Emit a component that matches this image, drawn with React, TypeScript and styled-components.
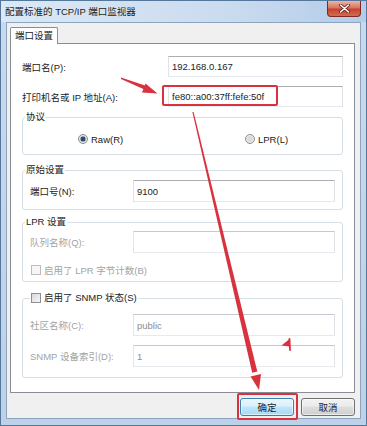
import React from 'react';
import styled, { createGlobalStyle } from 'styled-components';

const GlobalStyle = createGlobalStyle`
  html, body { margin: 0; padding: 0; background: #fff; }
  body {
    font-family: "Liberation Sans", "Noto Sans CJK SC", sans-serif;
    font-size: 9.5px;
    color: #222;
  }
  * { box-sizing: border-box; }
`;

const MARK = '#d8323e';

const Window = styled.div`
  position: relative;
  width: 367px;
  height: 426px;
  display: flex;
  flex-direction: column;
  border: 1px solid #56779c;
  background: linear-gradient(180deg, #c9daee 0%, #bdd1e8 100%);
  overflow: hidden;
`;

const TitleBar = styled.div`
  height: 21px;
  flex: none;
  display: flex;
  justify-content: space-between;
  align-items: flex-start;
  padding-left: 4px;
  background: linear-gradient(90deg, #dbe8f5 0%, #cbdcef 60%, #b3cce9 100%);
`;

const Title = styled.span`
  line-height: 21px;
  color: #1c1c1c;
`;

const CloseButton = styled.div`
  width: 34px;
  height: 16px;
  margin-right: 5px;
  display: flex;
  align-items: center;
  justify-content: center;
  border: 1px solid #7e2a22;
  border-top: none;
  border-radius: 0 0 4px 4px;
  background: linear-gradient(180deg, #ebb5a9 0%, #d9745f 45%, #c6432f 55%, #d56b50 100%);
`;

const Client = styled.div`
  flex: 1;
  margin: 0 5px 6px;
  background: #f0f0f0;
  border: 1px solid #8da4be;
  padding: 4px 5px 0 3px;
  display: flex;
  flex-direction: column;
`;

const TabStrip = styled.div`
  display: flex;
  align-items: flex-end;
  height: 16px;
`;

const Tab = styled.div`
  position: relative;
  z-index: 1;
  width: 48px;
  height: 17px;
  margin-bottom: -1px;
  background: #fff;
  border: 1px solid #898c95;
  border-bottom: none;
  border-radius: 2px 2px 0 0;
  text-align: center;
  line-height: 16px;
`;

const Panel = styled.div`
  height: 350px;
  background: #fff;
  border: 1px solid #898c95;
  padding: 12px 11px 0;
  display: flex;
  flex-direction: column;
`;

const FieldRow = styled.div<{ $label: number; $top?: number }>`
  display: grid;
  grid-template-columns: ${p => p.$label}px 1fr;
  align-items: center;
  margin-top: ${p => p.$top ?? 0}px;
`;

const Label = styled.span<{ $disabled?: boolean }>`
  color: ${p => (p.$disabled ? '#a3a3a3' : '#222')};
  white-space: nowrap;
`;

const BoxWrap = styled.div`
  position: relative;
`;

const TextBox = styled.input<{ $h?: number }>`
  display: block;
  width: 100%;
  height: ${p => p.$h ?? 21}px;
  padding: 0 3px;
  margin: 0;
  font: inherit;
  color: #222;
  background: #fff;
  border: 1px solid;
  border-color: #abadb3 #dbdfe6 #e3e9ef #e2e3ea;
  border-radius: 0;
  outline: none;
  &:disabled {
    color: #8c8c8c;
    background: #fff;
    border-color: #c6c9cf #dfe2e7 #e6e9ee #e2e4e9;
  }
`;

const MarkFrame = styled.div<{ $l: number; $t: number; $w: number; $h: number }>`
  position: absolute;
  left: ${p => p.$l}px;
  top: ${p => p.$t}px;
  width: ${p => p.$w}px;
  height: ${p => p.$h}px;
  border: 2px solid ${MARK};
  border-radius: 2px;
  pointer-events: none;
`;

const Group = styled.fieldset<{ $top: number; $pb: number }>`
  margin: ${p => p.$top}px 0 0;
  padding: 0 7px ${p => p.$pb}px;
  border: 1px solid #d5dfe5;
  border-radius: 3px;
  min-width: 0;
`;

const Legend = styled.legend<{ $indent?: number }>`
  padding: 0 1px;
  margin-left: ${p => p.$indent ?? -5}px;
  line-height: 16px;
  display: flex;
  align-items: center;
  gap: 3px;
`;

const RadioRow = styled.div`
  display: grid;
  grid-template-columns: 167px auto;
  padding-left: 48px;
  margin-top: 6px;
  height: 16px;
  align-items: center;
`;

const Choice = styled.label<{ $disabled?: boolean }>`
  display: flex;
  align-items: center;
  gap: 3px;
  color: ${p => (p.$disabled ? '#a3a3a3' : '#222')};
  white-space: nowrap;
`;

const Radio = styled.span<{ $checked?: boolean }>`
  width: 10px;
  height: 10px;
  border-radius: 50%;
  border: 1px solid #8e8f8f;
  background: ${p =>
    p.$checked
      ? 'radial-gradient(circle, #2d4d6b 0 2.2px, #9fb4c6 2.6px, #e6e6e6 3.6px)'
      : 'radial-gradient(circle, #dcdcdc 0 2.5px, #eeeeee 4px)'};
`;

const Check = styled.span<{ $disabled?: boolean }>`
  width: 10px;
  height: 10px;
  border: 1px solid ${p => (p.$disabled ? '#bcbcbc' : '#8e8f8f')};
  background: ${p => (p.$disabled ? '#f6f6f6' : 'linear-gradient(135deg, #d8d8d8, #f7f7f7)')};
`;

const CheckRow = styled.div`
  margin: 9px 0 0 1px;
  height: 16px;
  display: flex;
  align-items: center;
`;

const ButtonRow = styled.div`
  display: flex;
  justify-content: flex-end;
  gap: 7px;
  margin-top: 5px;
`;

const Button = styled.button<{ $default?: boolean }>`
  width: 54px;
  height: 18px;
  padding: 0;
  font: inherit;
  color: #1e1e1e;
  border-radius: 3px;
  border: 1px solid ${p => (p.$default ? '#3c7fb1' : '#707070')};
  background: ${p =>
    p.$default
      ? 'linear-gradient(180deg, #eaf6fd 0%, #d9f0fc 45%, #bee6fd 50%, #a7d9f5 100%)'
      : 'linear-gradient(180deg, #f2f2f2 0%, #ebebeb 45%, #dddddd 50%, #cfcfcf 100%)'};
  box-shadow: inset 0 0 0 1px rgba(255, 255, 255, 0.6);
`;

const Annotations = styled.svg`
  position: absolute;
  left: -1px;
  top: -1px;
  width: 367px;
  height: 426px;
  pointer-events: none;
`;

export default function App() {
  return (
    <>
      <GlobalStyle />
      <Window>
        <TitleBar>
          <Title>配置标准的 TCP/IP 端口监视器</Title>
          <CloseButton>
            <svg width="11" height="9" viewBox="0 0 11 9">
              <path d="M1.5 1 L9.5 8 M9.5 1 L1.5 8" stroke="#5a1d16" strokeWidth="3" strokeLinecap="round" />
              <path d="M1.5 1 L9.5 8 M9.5 1 L1.5 8" stroke="#fff" strokeWidth="1.6" strokeLinecap="round" />
            </svg>
          </CloseButton>
        </TitleBar>

        <Client>
          <TabStrip>
            <Tab>端口设置</Tab>
          </TabStrip>
          <Panel>
            <FieldRow $label={146}>
              <Label>端口名(P):</Label>
              <TextBox readOnly value="192.168.0.167" />
            </FieldRow>
            <FieldRow $label={146} $top={9}>
              <Label>打印机名或 IP 地址(A):</Label>
              <BoxWrap>
                <TextBox readOnly value="fe80::a00:37ff:fefe:50f" />
                <MarkFrame $l={-6} $t={-1} $w={116} $h={21} />
              </BoxWrap>
            </FieldRow>

            <Group $top={2} $pb={7}>
              <Legend>协议</Legend>
              <RadioRow>
                <Choice>
                  <Radio $checked />
                  Raw(R)
                </Choice>
                <Choice>
                  <Radio />
                  LPR(L)
                </Choice>
              </RadioRow>
            </Group>

            <Group $top={7} $pb={7}>
              <Legend>原始设置</Legend>
              <FieldRow $label={103} $top={2}>
                <Label>端口号(N):</Label>
                <TextBox $h={22} readOnly value="9100" />
              </FieldRow>
            </Group>

            <Group $top={4} $pb={3}>
              <Legend>LPR 设置</Legend>
              <FieldRow $label={103} $top={1}>
                <Label $disabled>队列名称(Q):</Label>
                <TextBox $h={22} disabled value="" />
              </FieldRow>
              <CheckRow>
                <Choice $disabled>
                  <Check $disabled />
                  启用了 LPR 字节计数(B)
                </Choice>
              </CheckRow>
            </Group>

            <Group $top={8} $pb={10}>
              <Legend $indent={0}>
                <Check />
                启用了 SNMP 状态(S)
              </Legend>
              <FieldRow $label={103} $top={8}>
                <Label $disabled>社区名称(C):</Label>
                <TextBox $h={22} disabled value="public" />
              </FieldRow>
              <FieldRow $label={103} $top={9}>
                <Label $disabled>SNMP 设备索引(D):</Label>
                <TextBox $h={22} disabled value="1" />
              </FieldRow>
            </Group>
          </Panel>

          <ButtonRow>
            <BoxWrap>
              <Button $default>确定</Button>
              <MarkFrame $l={-3} $t={-5} $w={61} $h={27} />
            </BoxWrap>
            <Button>取消</Button>
          </ButtonRow>
        </Client>

        <Annotations viewBox="0 0 367 426">
          <polygon points="121,77.6 121,79 145.5,90 146.5,86" fill={MARK} />
          <polygon points="157.5,93.5 145.5,83.5 142,92.5" fill={MARK} />
          <polygon points="192.4,112 193.6,112 257.3,371.5 252.2,372.7" fill={MARK} />
          <polygon points="259,390 250.6,376.5 261,374" fill={MARK} />
          <polygon points="281.5,345.5 289.5,339 289.5,346.5" fill={MARK} />
          <path d="M289.5 339 L290 350" stroke={MARK} strokeWidth="1.8" fill="none" strokeLinecap="round" />
        </Annotations>
      </Window>
    </>
  );
}
